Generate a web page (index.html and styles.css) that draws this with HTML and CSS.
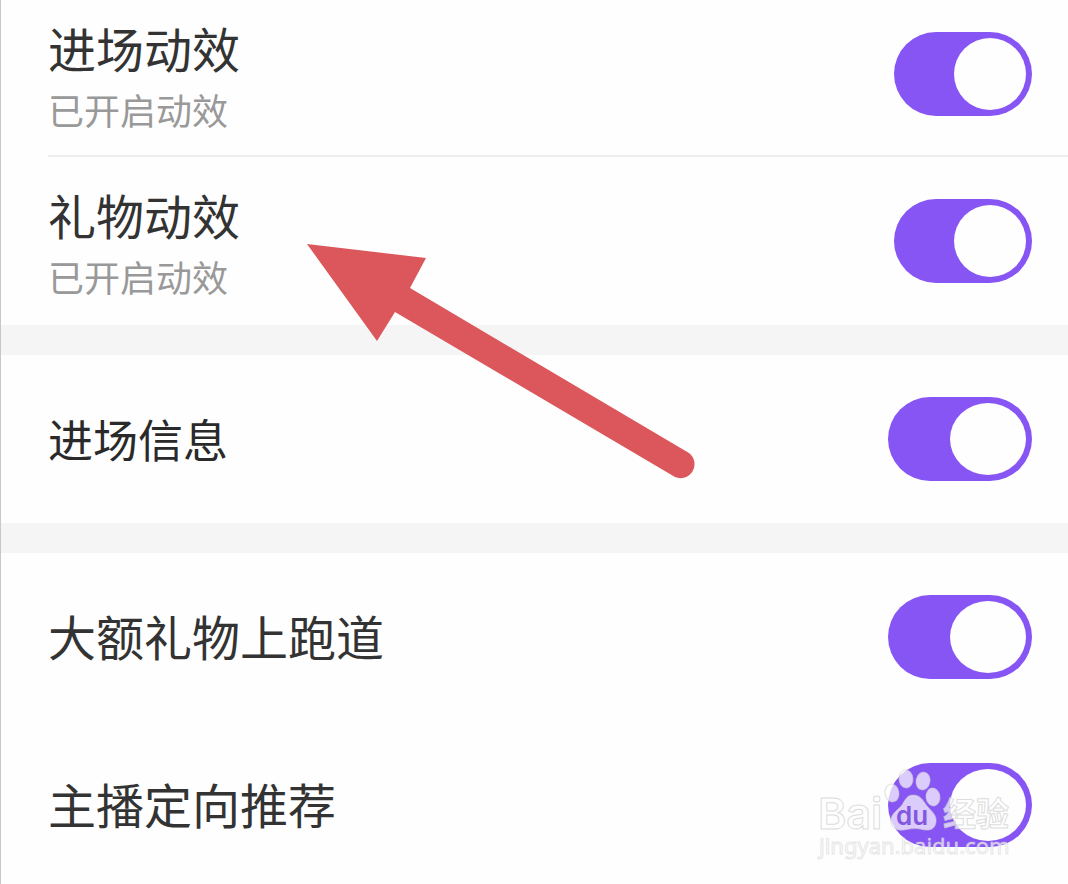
FILE: index.html
```html
<!DOCTYPE html>
<html lang="zh-CN">

<head>
  <meta charset="UTF-8">
  <meta name="viewport" content="width=device-width, initial-scale=1.0">
  <title>动效设置</title>
  <link rel="stylesheet" href="styles.css">
</head>

<body>
  <main class="page">
    <section class="group">
      <div class="row first">
        <label class="text" for="enter">
          <span class="title">进场动效</span>
          <span class="desc">已开启动效</span>
        </label>
        <input type="checkbox" id="enter" class="switch" checked>
      </div>
      <div class="row">
        <label class="text" for="gift">
          <span class="title">礼物动效</span>
          <span class="desc">已开启动效</span>
        </label>
        <input type="checkbox" id="gift" class="switch" checked>
      </div>
    </section>

    <section class="group">
      <div class="row">
        <label class="text" for="info"><span class="title small">进场信息</span></label>
        <input type="checkbox" id="info" class="switch wide" checked>
      </div>
    </section>

    <section class="group">
      <div class="row">
        <label class="text" for="track"><span class="title">大额礼物上跑道</span></label>
        <input type="checkbox" id="track" class="switch wide" checked>
      </div>
      <div class="row last">
        <label class="text" for="recommend"><span class="title">主播定向推荐</span></label>
        <input type="checkbox" id="recommend" class="switch wide" checked>
      </div>
    </section>

    <svg class="arrow" width="390" height="236" viewBox="0 0 390 236" aria-hidden="true">
      <path d="M0 0L119 14L103 44L382 209A14 14 0 0 1 368 233L88 68L70 97Z" />
    </svg>

    <svg class="watermark" width="200" height="100" viewBox="0 0 200 100" role="img" aria-label="Baidu 经验">
      <text class="brand" x="2" y="63">Bai</text>
      <g class="paw">
        <ellipse cx="76" cy="27" rx="7" ry="9" transform="rotate(-10 76 27)" />
        <ellipse cx="90" cy="13" rx="7" ry="9" transform="rotate(-4 90 13)" />
        <ellipse cx="107" cy="15" rx="7" ry="9" transform="rotate(10 107 15)" />
        <ellipse cx="117" cy="31" rx="7" ry="9" transform="rotate(-8 117 31)" />
        <path d="M97 29C105 29 107 35 111 40C116 46 121 49 120 56C119 65 111 65 104 63C98 62 93 63 88 64C80 65 74 61 75 53C76 47 82 44 86 39C89 34 91 29 97 29Z" />
      </g>
      <text class="du" x="80" y="59">du</text>
      <text class="brand cn" x="127" y="60">经验</text>
      <text class="site" x="3" y="88">jingyan.baidu.com</text>
    </svg>
  </main>
</body>

</html>
```

FILE: styles.css
```css
* {
  margin: 0;
  padding: 0;
  box-sizing: border-box;
}

body {
  background-color: #fefefe;
  font-family: "Noto Sans CJK SC", sans-serif;
}

.page {
  position: relative;
  min-height: 100vh;
  border-left: 1px solid #c8c8c8;
  overflow: hidden;
}

.group + .group {
  border-top: 30px solid #f5f5f5;
}

.row {
  display: flex;
  align-items: center;
  justify-content: space-between;
  min-height: 168px;
  margin-left: 47px;
  padding-right: 36px;
}

.first {
  min-height: 157px;
  padding-bottom: 8px;
  border-bottom: 2px solid #ededed;
}

.last {
  min-height: 163px;
  padding-top: 5px;
}

.text {
  display: flex;
  flex-direction: column;
  padding-bottom: 4px;
}

.title {
  font-size: 48px;
  line-height: 74px;
  color: #333;
}

.small {
  padding-top: 4px;
  font-size: 45px;
  color: #2a2a2a;
}

.desc {
  font-size: 36px;
  line-height: 50px;
  color: #999;
}

.switch {
  appearance: none;
  display: flex;
  flex-shrink: 0;
  align-items: center;
  width: 138px;
  height: 84px;
  padding: 0 6px;
  border-radius: 42px;
  background-color: #ccc;
  cursor: pointer;
}

.switch::before {
  content: "";
  width: 72px;
  height: 72px;
  border-radius: 50%;
  background-color: #fefefe;
}

.switch:checked {
  justify-content: flex-end;
  background-color: #8855f5;
}

.wide {
  width: 144px;
}

.wide::before {
  width: 76px;
}

.arrow {
  position: absolute;
  left: 306px;
  top: 244px;
  fill: #dc575b;
  pointer-events: none;
}

.watermark {
  position: absolute;
  right: 52px;
  bottom: 18px;
  fill: rgba(255, 255, 255, .7);
  pointer-events: none;
}

.brand {
  font: 600 43px Inter, sans-serif;
  stroke: rgba(205, 205, 205, .7);
  stroke-width: 1px;
}

.cn {
  font: bold 33px "Noto Sans CJK SC", sans-serif;
}

.paw {
  stroke: rgba(200, 200, 200, .6);
  stroke-width: 1px;
}

.du {
  font: 600 26px Inter, sans-serif;
  fill: #8158df;
}

.site {
  font: 22px "Noto Sans", sans-serif;
  stroke: rgba(205, 205, 205, .5);
  stroke-width: 1px;
}
```
